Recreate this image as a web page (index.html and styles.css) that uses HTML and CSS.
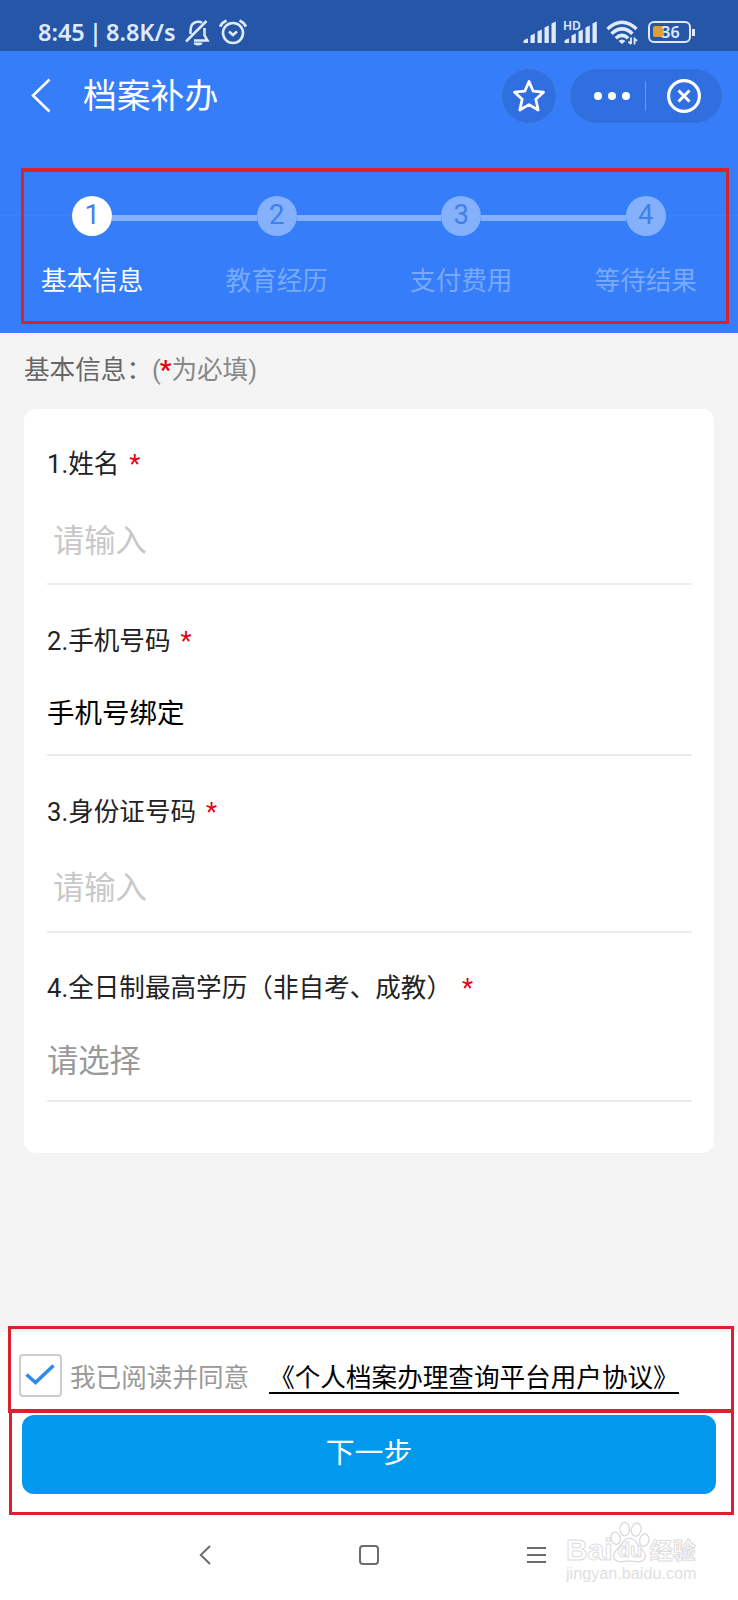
FILE: index.html
```html
<!DOCTYPE html>
<html lang="zh-CN">
<head>
    <meta charset="UTF-8">
    <meta name="viewport" content="width=device-width, initial-scale=1.0">
    <title>档案补办</title>
    <link rel="stylesheet" href="styles.css">
</head>
<body>
    <div class="status-bar">
        <span class="status-text">8:45 | 8.8K/s</span>
        <svg class="bell" width="26" height="28" viewBox="0 0 26 28" fill="none" stroke="#dfeaff" stroke-width="2.5">
            <path d="M5.5 15V11.5C5.5 6 8.5 3.2 12.5 2.8C14.5 2.6 16 3 17 3.8M19.5 9V16.5L22.5 21.5H9"/>
            <path d="M1 22.5L21.5 2"/>
            <path d="M8.5 23.5h9a4.5 3 0 0 1-9 0z" fill="#dfeaff" stroke="none"/>
        </svg>
        <svg class="alarm" width="28" height="28" viewBox="0 0 28 28" fill="none" stroke="#dfeaff" stroke-width="2.6">
            <circle cx="14" cy="15" r="10"/>
            <path d="M10 13.5l4 3.5 4-3.5"/>
            <path d="M1 8.5Q3 4.5 7.5 2.5M27 8.5Q25 4.5 20.5 2.5" stroke-width="2.8"/>
        </svg>
        <div class="status-right">
            <svg class="signal" width="34" height="24" viewBox="0 0 34 24" fill="#dfeaff">
                <path d="M0.5 21.5q0-2 4.500-3v4.500h-4.500z"/>
                <path d="M7.5 15.5l4.300-2v9.500h-4.300zM14.5 11.5l4.300-2v13.500h-4.300zM21.5 7.5l4.300-2v17.500h-4.300zM28.5 3.5l4.300-2v21.500h-4.300z"/>
            </svg>
            <div class="hd-signal">
                <span class="hd">HD</span>
                <svg width="34" height="24" viewBox="0 0 34 24" fill="#dfeaff">
                    <path d="M0.5 21.5q0-2 4.500-3v4.500h-4.500z"/>
                    <path d="M7.5 15.5l4.300-2v9.500h-4.300zM14.5 11.5l4.300-2v13.500h-4.300zM21.5 7.5l4.300-2v17.500h-4.300zM28.5 3.5l4.300-2v21.500h-4.300z"/>
                </svg>
            </div>
            <svg class="wifi" width="32" height="26" viewBox="0 0 32 26" fill="none" stroke="#dfeaff" stroke-width="3.4">
                <path d="M1.5 9Q16-4.5 30.500 9"/>
                <path d="M5.5 13.7Q16 4 26.5 13.7"/>
                <path d="M9.8 18.2Q16 12.5 22.200 18.200"/>
                <path d="M16 24l-3.5-3q3.500-3 7 0z" fill="#dfeaff" stroke="none"/>
                <path d="M25 17.5v6.500M28.500 17.500v7M25 24l-2.500-2.500M28.500 18.500l2.500 2.500" stroke-width="1.8"/>
            </svg>
            <div class="battery">
                <div class="battery-body"><span class="battery-fill"></span><span class="battery-num">36</span></div>
                <span class="battery-tip"></span>
            </div>
        </div>
    </div>

    <div class="top">
        <div class="title-bar">
            <svg class="back" width="22" height="36" viewBox="0 0 22 36" fill="none" stroke="#fff" stroke-width="2.6">
                <path d="M19.5 1.500L3 17.500L19.500 33.500"/>
            </svg>
            <h1>档案补办</h1>
            <div class="star-button">
                <svg width="34" height="34" viewBox="0 0 34 34" fill="none" stroke="#fff" stroke-width="2.8" stroke-linejoin="round">
                    <path d="M17 2.500L21.200 12.200L31.500 13.200L23.800 20.200L26.200 31L17 25.600L7.800 31L10.200 20.200L2.500 13.200L12.800 12.200Z"/>
                </svg>
            </div>
            <div class="capsule">
                <span class="dots"><i></i><i></i><i></i></span>
                <span class="split"></span>
                <svg width="36" height="36" viewBox="0 0 36 36" fill="none" stroke="#fff" stroke-width="3.2">
                    <circle cx="18" cy="18" r="15.4"/>
                    <path d="M12.5 12.5L23.5 23.5M23.5 12.5L12.5 23.5" stroke-width="3"/>
                </svg>
            </div>
        </div>

        <div class="steps">
            <div class="step active">
                <div class="step-track"><span class="line hidden"></span><span class="num">1</span><span class="line"></span></div>
                <div class="step-name">基本信息</div>
            </div>
            <div class="step">
                <div class="step-track"><span class="line"></span><span class="num">2</span><span class="line"></span></div>
                <div class="step-name">教育经历</div>
            </div>
            <div class="step">
                <div class="step-track"><span class="line"></span><span class="num">3</span><span class="line"></span></div>
                <div class="step-name">支付费用</div>
            </div>
            <div class="step">
                <div class="step-track"><span class="line"></span><span class="num">4</span><span class="line hidden"></span></div>
                <div class="step-name">等待结果</div>
            </div>
            <div class="mark mark-steps"></div>
        </div>
    </div>

    <div class="section-title">基本信息：<span class="hint">(<b>*</b>为必填)</span></div>

    <div class="card">
        <div class="field name">
            <div class="label">1.姓名<span class="req">*</span></div>
            <div class="value placeholder">请输入</div>
        </div>
        <div class="field phone">
            <div class="label">2.手机号码<span class="req">*</span></div>
            <div class="value">手机号绑定</div>
        </div>
        <div class="field idcard">
            <div class="label">3.身份证号码<span class="req">*</span></div>
            <div class="value placeholder">请输入</div>
        </div>
        <div class="field degree">
            <div class="label">4.全日制最高学历（非自考、成教）<span class="req">*</span></div>
            <div class="value select">请选择</div>
        </div>
    </div>

    <div class="footer">
        <div class="agree">
            <span class="checkbox">
                <svg width="30" height="22" viewBox="0 0 30 22" fill="none" stroke="#2f8de8" stroke-width="3.6">
                    <path d="M1.5 10.5L10.5 18.5L28.5 1.5"/>
                </svg>
            </span>
            <span class="agree-text">我已阅读并同意</span>
            <a class="agree-link">《个人档案办理查询平台用户协议》</a>
            <div class="mark mark-agree"></div>
        </div>
        <div class="submit">
            <div class="next">下一步</div>
            <div class="mark mark-submit"></div>
        </div>
        <div class="nav">
            <svg width="12" height="20" viewBox="0 0 12 20" fill="none" stroke="#6c6c6c" stroke-width="2">
                <path d="M11 1L1.800 10L11 19"/>
            </svg>
            <span class="home"></span>
            <svg width="19" height="20" viewBox="0 0 19 20" stroke="#6c6c6c" stroke-width="2">
                <path d="M0 3h19M0 10h19M0 17h19"/>
            </svg>
        </div>
        <div class="watermark">
            <div class="wm-logo">
                <span class="wm-bai">Bai</span>
                <span class="wm-paw">
                    <svg width="40" height="44" viewBox="0 0 42 44" fill="#fff" stroke="#d9d9d9" stroke-width="1.3">
                        <ellipse cx="15.5" cy="8.5" rx="5" ry="7"/>
                        <ellipse cx="27.5" cy="9" rx="5" ry="7" transform="rotate(12 27.5 9)"/>
                        <ellipse cx="6" cy="18" rx="4.8" ry="6.5" transform="rotate(-15 6 18)"/>
                        <ellipse cx="36" cy="20" rx="4.8" ry="6.5" transform="rotate(12 36 20)"/>
                        <path d="M20.5 18c6 0 8 6 11 9.500c4 4.500 7 7 5 11.500c-3 6-10 3-16 3s-13 3-16-2.500c-2.500-5 2-8.500 5.500-12.500c3-3.500 5-9 10.500-9z"/>
                    </svg>
                    <span class="wm-du">du</span>
                </span>
                <span class="wm-exp">经验</span>
            </div>
            <div class="wm-url">jingyan.baidu.com</div>
        </div>
    </div>
</body>
</html>
```
FILE: styles.css
```css
* {
    box-sizing: border-box;
}
body {
    margin: 0;
    width: 738px;
    height: 1600px;
    overflow: hidden;
    display: flex;
    flex-direction: column;
    background: #f4f4f4;
    font-family: Roboto, "Noto Sans CJK SC", sans-serif;
    font-size: 25.6px;
}
svg {
    display: block;
    flex: none;
}

/* system status bar */
.status-bar {
    height: 51px;
    padding: 13px 43px 0 38px;
    display: flex;
    align-items: flex-start;
    background: #2556a8;
    color: #dfeaff;
}
.status-text {
    width: 147px;
    font-family: "Noto Sans", sans-serif;
    font-size: 23.5px;
    font-weight: 600;
    line-height: 38px;
    word-spacing: -2px;
    white-space: nowrap;
}
.bell {
    margin-top: 6px;
}
.alarm {
    margin: 5px 0 0 8px;
}
.status-right {
    margin-left: auto;
    display: flex;
}
.signal {
    margin-top: 7px;
}
.hd-signal {
    position: relative;
    margin: 7px 0 0 7px;
}
.hd {
    position: absolute;
    left: -1px;
    top: 0;
    font-family: "Noto Sans", sans-serif;
    font-size: 12px;
    font-weight: 600;
    line-height: 12px;
}
.wifi {
    margin: 7px 0 0 8px;
}
.battery {
    display: flex;
    align-items: center;
    height: 22px;
    margin: 8px 0 0 10px;
}
.battery-body {
    position: relative;
    width: 43px;
    height: 22px;
    border: 2.5px solid #dfeaff;
    border-radius: 6px;
    text-align: center;
}
.battery-fill {
    position: absolute;
    left: 3px;
    top: 3px;
    width: 11px;
    height: 11px;
    border-radius: 2px;
    background: #e39d2e;
}
.battery-num {
    position: relative;
    left: 1px;
    display: block;
    font-family: "Noto Sans", sans-serif;
    font-size: 16px;
    font-weight: 600;
    line-height: 19px;
}
.battery-tip {
    width: 3px;
    height: 7px;
    margin-left: 1px;
    background: #dfeaff;
}

/* blue header */
.top {
    height: 282px;
    background: #357df9;
    color: #fff;
}
.title-bar {
    height: 90px;
    padding: 0 15px 0 30px;
    display: flex;
    align-items: center;
}
.title-bar h1 {
    margin: 1px auto 0 31px;
    font-size: 33.8px;
    font-weight: 400;
    line-height: 40px;
}
.star-button {
    width: 56px;
    height: 56px;
    margin-right: 12px;
    display: flex;
    align-items: center;
    justify-content: center;
    border: 1px solid #4181ea;
    border-radius: 50%;
    background: #306fe0;
}
.capsule {
    width: 154px;
    height: 56px;
    padding: 0 20px 0 24px;
    display: flex;
    align-items: center;
    justify-content: space-between;
    border: 1px solid #4181ea;
    border-radius: 28px;
    background: #306fe0;
}
.dots {
    display: flex;
    gap: 6px;
}
.dots i {
    width: 8px;
    height: 8px;
    border-radius: 50%;
    background: #fff;
}
.split {
    width: 1px;
    height: 30px;
    margin: 0 4px 0 -2px;
    background: #6b9bf0;
}

/* progress steps */
.steps {
    position: relative;
    display: grid;
    grid-template-columns: repeat(4, 1fr);
    padding-top: 55px;
}
.step-track {
    display: flex;
    align-items: center;
}
.line {
    flex: 1;
    height: 6px;
    margin-top: 4px;
    background: #85b0fb;
}
.line.hidden {
    height: 1px;
    margin-top: -2px;
    background: #3f83f9;
}
.num {
    width: 40px;
    height: 40px;
    border-radius: 50%;
    background: #85b0fb;
    color: #3f80ea;
    font-size: 27.5px;
    line-height: 38px;
    text-align: center;
}
.step-name {
    margin-top: 27px;
    color: #78a9fb;
    line-height: 36px;
    text-align: center;
}
.active .num {
    background: #fff;
}
.active .step-name {
    color: #fff;
}

/* red frames */
.mark {
    position: absolute;
    border: 3px solid #d8222e;
    pointer-events: none;
}
.mark-steps {
    left: 21px;
    top: 27px;
    width: 708px;
    height: 156px;
    border-top-width: 4px;
}
.mark-agree {
    left: 8px;
    top: -6px;
    width: 726px;
    height: 87px;
}
.mark-submit {
    left: 9px;
    top: -2px;
    width: 725px;
    height: 106px;
}

/* form */
.section-title {
    height: 76px;
    padding: 19px 24px 0;
    color: #666;
    line-height: 36px;
}
.hint {
    color: #888;
}
.hint b {
    margin-left: -1px;
    color: #e60012;
    font-weight: 700;
}
.card {
    width: 690px;
    height: 744px;
    margin-left: 24px;
    padding: 0 22px 0 23px;
    border-radius: 12px;
    background: #fff;
}
.field {
    display: flex;
    flex-direction: column;
    justify-content: space-between;
    border-bottom: 2px solid #ececec;
}
.label {
    color: #222;
    line-height: 36px;
}
.req {
    margin-left: 10px;
    color: #e60012;
}
.value {
    color: #000;
    font-size: 27.5px;
    line-height: 40px;
}
.placeholder {
    padding-left: 6px;
    color: #c8c8c8;
    font-size: 31.3px;
}
.select {
    color: #999;
    font-size: 31.3px;
}
.name {
    height: 176px;
    padding: 37px 0 21px;
}
.phone {
    height: 171px;
    padding: 38px 0 20px;
}
.idcard {
    height: 177px;
    padding: 38px 0 22px;
}
.degree {
    height: 169px;
    padding: 37px 0 18px;
}

/* bottom area */
.footer {
    position: relative;
    height: 268px;
    margin-top: auto;
    background: #fff;
}
.agree {
    position: relative;
    height: 79px;
    padding: 0 0 0 19px;
    display: flex;
    align-items: center;
}
.checkbox {
    width: 43px;
    height: 43px;
    margin-top: 8px;
    padding-right: 2px;
    padding-bottom: 2px;
    display: flex;
    align-items: center;
    justify-content: center;
    border: 2px solid #ccc;
    border-radius: 4px;
}
.agree-text {
    margin-left: 8px;
    margin-top: 13px;
    color: #999;
    line-height: 31px;
}
.agree-link {
    margin-left: 20px;
    margin-top: 14px;
    padding-top: 1px;
    border-bottom: 2px solid #000;
    color: #000;
    line-height: 28px;
}
.submit {
    position: relative;
    height: 104px;
    padding: 4px 22px 0;
}
.next {
    height: 79px;
    border-radius: 12px;
    background: #0099ee;
    color: #fff;
    font-size: 28.8px;
    line-height: 76px;
    text-align: center;
}
.nav {
    height: 80px;
    padding: 0 192px 0 199px;
    display: flex;
    align-items: center;
    justify-content: space-between;
}
.home {
    width: 20px;
    height: 20px;
    border: 2px solid #6c6c6c;
    border-radius: 4px;
}

/* watermark lies over the nav bar */
.watermark {
    position: absolute;
    left: 566px;
    top: 188px;
    width: 134px;
}
.wm-logo {
    display: flex;
    align-items: flex-end;
    height: 44px;
    color: #fff;
    font-family: "Liberation Sans", "Noto Sans CJK SC", sans-serif;
    font-weight: 700;
    -webkit-text-stroke: 1px #dcdcdc;
}
.wm-bai {
    font-size: 30px;
    line-height: 28px;
}
.wm-paw {
    position: relative;
    margin-left: -3px;
}
.wm-du {
    position: absolute;
    left: 8px;
    top: 19px;
    font-size: 20px;
    line-height: 22px;
}
.wm-exp {
    font-size: 23px;
    line-height: 26px;
}
.wm-url {
    color: #e0e0e0;
    font-family: "Liberation Sans", sans-serif;
    font-size: 16.2px;
    line-height: 18px;
    white-space: nowrap;
}
```
